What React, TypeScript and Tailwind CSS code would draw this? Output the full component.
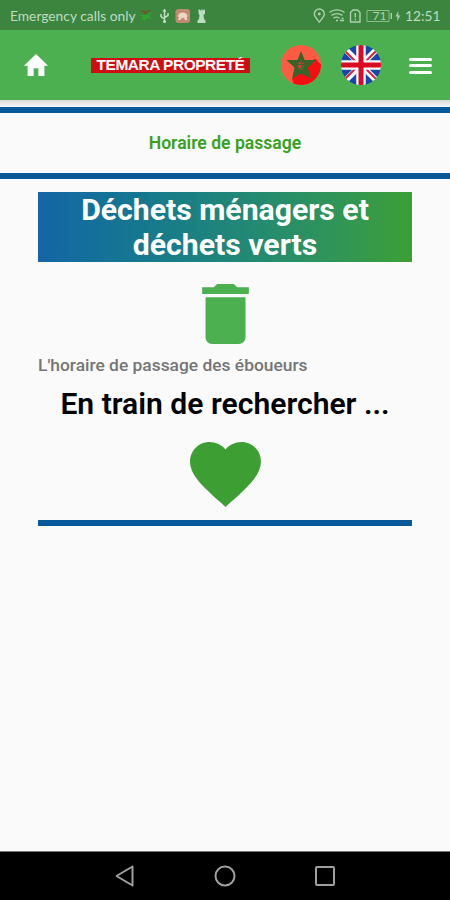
import type { ReactNode } from "react";

function StatusBar() {
  return (
    <div className="flex h-[30px] items-center justify-between bg-[#3b853f] pr-[10px] pl-[10px] font-['Lato',sans-serif] text-[#bfdcc0]">
      <div className="flex items-center">
        <span className="w-[127px] pt-px text-[13.8px] leading-4 whitespace-nowrap">
          Emergency calls only
        </span>
        <svg className="mt-px h-4 w-[74px]" viewBox="137 8 74 16" fill="none">
          <path d="M140 10l6 1 5-1-4 3-2 2-1-2z" fill="#75552c" />
          <path d="M139 22l4-5-3-2 6 0 6-3-3 4 3 3-5-1-3 3-1-2z" fill="#2fa52f" />
          <path
            d="M164.500 10v12M161 14v2.500l3.500 2.500M168 13v2.500l-3.500 2"
            stroke="#bfdcc0"
            strokeWidth="1.500"
          />
          <path d="M162.500 11.500l2-3 2 3z" fill="#bfdcc0" />
          <circle cx="164.500" cy="21.500" r="1.600" fill="#bfdcc0" />
          <rect x="175.500" y="9" width="14.500" height="14" rx="3" fill="#c08a70" />
          <path d="M178 16.500c0-5.500 9.500-5.500 9.500 0l-1 1 1 2.500h-2.500l-1-2h-2.500l-1 2h-2.500l1-2.500z" fill="#f0d5c5" />
          <path
            d="M198.500 9.500h1.500v1h1v-1h1.500v1h1v-1h1.500v4l-1.500 1.500.5 4 1.500 1.500V23h-8v-2.500l1.500-1.500.5-4-1-1.500z"
            fill="#bfdcc0"
          />
        </svg>
      </div>
      <div className="flex items-center">
        <svg className="mt-px h-4 w-[90px]" viewBox="313 8 90 16" fill="none" stroke="#add0ae" strokeWidth="1.400">
          <path d="M319.300 22c-3-3.500-5-5.500-5-8a5 5 0 0 1 10 0c0 2.500-2 4.500-5 8z" />
          <circle cx="319.300" cy="14" r="1.400" fill="#add0ae" stroke="none" />
          <path d="M329.500 12.500c4-3.500 11-3.500 15 0M331.500 15.500c3-2.500 8-2.500 11 0M333.500 18.300c2-1.600 4-1.600 6 0" />
          <path d="M336 20.500h2M340 20.500h4M341.500 18.500h2" />
          <path d="M353 10h4.500l2.500 2.500V22h-9.500v-9.500zM355.300 13v4.500M355.300 18.800v1.500" />
          <path d="M367 10.500h22v11h-22z" stroke="#8abc8c" strokeWidth="1" />
          <path d="M391.300 13v6" />
          <path d="M398.300 11l-2.800 5.500h2l-.5 5 3.300-6h-2z" fill="#add0ae" stroke="none" />
          <text x="372.500" y="20.300" fill="#add0ae" stroke="none" fontSize="12">
            71
          </text>
        </svg>
        <span className="w-[37px] pt-px pl-[2px] text-[13.8px] leading-4 whitespace-nowrap">12:51</span>
      </div>
    </div>
  );
}

function MoroccoFlag() {
  return (
    <svg className="size-10" viewBox="0 0 40 40">
      <circle cx="20" cy="20" r="20" fill="#ff5b42" />
      <path d="M34 13.500l6 6A20 20 0 0 1 12.500 38.500L11 33.500z" fill="#f90d12" />
      <path
        d="M20 6l3.700 9H35l-8.200 7.500L30 33.500l-10-5-9 5.500 2.500-11.500L5.500 15h11z"
        fill="#35652a"
      />
      <path d="M20 16l3.500 3.500-1.500 5h-4l-1.500-5z" fill="#cf4030" />
      <path d="M16.500 19.500h7L18 25M20 16l2 8.500" fill="none" stroke="#35652a" strokeWidth="1" />
    </svg>
  );
}

function EnglishFlag() {
  return (
    <svg className="size-10" viewBox="0 0 40 40">
      <defs>
        <clipPath id="uk">
          <circle cx="20" cy="20" r="20" />
        </clipPath>
      </defs>
      <g clipPath="url(#uk)">
        <path d="M0 0h40v40H0z" fill="#1746ad" />
        <path d="M3 3l34 34M37 3L3 37" stroke="#fff" strokeWidth="6" />
        <path d="M4 6l11 11M37 4L24 17M3 35l12-12M25 24l12 12" stroke="#d8203a" strokeWidth="2" />
        <path d="M20 0v40M0 20h40" stroke="#fff" strokeWidth="9.500" />
        <path d="M20 0v40M0 20h40" stroke="#d90b22" strokeWidth="5" />
      </g>
    </svg>
  );
}

function Header() {
  return (
    <header className="flex h-[70px] items-center bg-[#4caf50] pl-[24px]">
      <svg className="h-[22px] w-[24px]" viewBox="2 3 20 17" preserveAspectRatio="none" fill="#fff">
        <path d="M10 20v-6h4v6h5v-8h3L12 3 2 12h3v8z" />
      </svg>
      <div className="ml-[43px] flex h-[15px] w-[159px] items-center justify-center bg-[#cf0d12] font-['Liberation_Sans',sans-serif] text-[15.5px] font-bold tracking-[-0.5px] whitespace-nowrap text-white">
        TEMARA PROPRETÉ
      </div>
      <div className="ml-[30.500px] flex gap-5">
        <MoroccoFlag />
        <EnglishFlag />
      </div>
      <div className="mt-px ml-[28px] flex w-[23.500px] flex-col gap-[3.500px]">
        <div className="h-[3px] rounded-full bg-white" />
        <div className="h-[3px] rounded-full bg-white" />
        <div className="h-[3px] rounded-full bg-white" />
      </div>
    </header>
  );
}

function NavButton({ children }: { children: ReactNode }) {
  return (
    <button className="flex size-6 items-center justify-center">
      <svg className="size-6" viewBox="0 0 24 24" fill="none" stroke="#a0a0a0" strokeWidth="2" strokeLinejoin="round">
        {children}
      </svg>
    </button>
  );
}

export default function App() {
  return (
    <div className="flex h-[900px] w-[450px] flex-col overflow-hidden bg-[#fafafa] font-['Roboto',sans-serif]">
      <StatusBar />
      <Header />

      <div className="h-[7px] bg-linear-to-b from-[#d9d9d9] to-[#f8f8f8]" />
      <div className="flex h-[71.500px] items-center justify-center border-y-[6px] border-[#07599a]">
        <h1 className="text-[17.6px] font-semibold text-[#38a01e]">Horaire de passage</h1>
      </div>

      <main className="flex flex-1 flex-col items-center px-[38px] pt-[13.500px]">
        <h2 className="h-[69.500px] w-[374.500px] bg-linear-to-r from-[#1565a6] to-[#3c9f32] text-center text-[30.2px] leading-[35px] font-bold whitespace-nowrap text-white">
          Déchets ménagers et
          <br />
          déchets verts
        </h2>

        <svg className="mt-[22.500px] h-[60px] w-[47px]" viewBox="5 3 14 18" fill="#4caf50">
          <path d="M6 19c0 1.100.9 2 2 2h8c1.100 0 2-.9 2-2V7H6v12zM19 4h-3.500l-1-1h-5l-1 1H5v2h14V4z" />
        </svg>

        <p className="mt-[10.500px] w-full text-[17.4px] leading-5 font-medium text-[#757575]">
          L'horaire de passage des éboueurs
        </p>
        <p className="mt-[11.500px] text-[30.1px] leading-[36px] font-semibold whitespace-nowrap text-black">
          En train de rechercher ...
        </p>

        <svg className="mt-[20px] h-[65px] w-[71px]" viewBox="2 3 20 18.350" fill="#3d9e33">
          <path d="M12 21.350l-1.450-1.320C5.400 15.360 2 12.280 2 8.500 2 5.420 4.420 3 7.500 3c1.740 0 3.410.81 4.500 2.090C13.090 3.810 14.760 3 16.500 3 19.580 3 22 5.420 22 8.500c0 3.780-3.400 6.860-8.550 11.540L12 21.350z" />
        </svg>
        <div className="mt-[13px] h-[6px] w-[374.500px] bg-[#07599a]" />
      </main>

      <nav className="flex h-[49px] items-center justify-center gap-[76px] border-t border-[#777] bg-black">
        <NavButton>
          <path d="M3.500 12L19.500 2.500v19z" />
        </NavButton>
        <NavButton>
          <circle cx="12" cy="12" r="9.500" />
        </NavButton>
        <NavButton>
          <rect x="3" y="3" width="18" height="18" rx="1" />
        </NavButton>
      </nav>
    </div>
  );
}
